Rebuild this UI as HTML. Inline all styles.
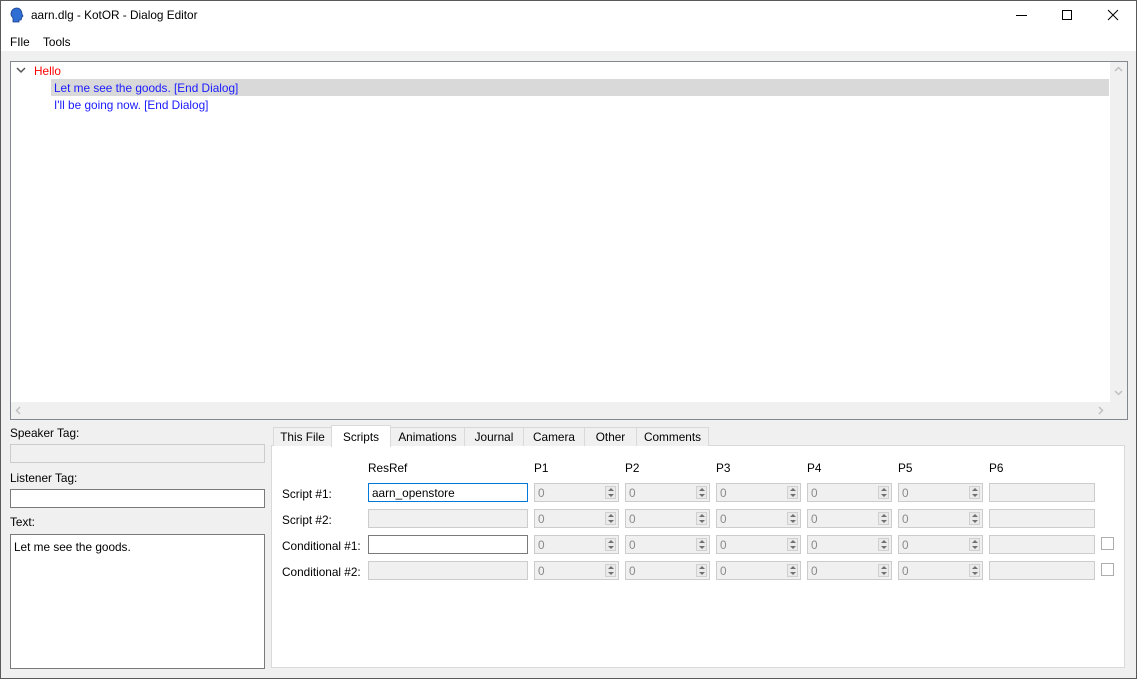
<!DOCTYPE html><html><head><style>
*{box-sizing:border-box;margin:0;padding:0}
body{width:1137px;height:679px;overflow:hidden;font-family:"Liberation Sans",sans-serif;font-size:11.8px;color:#000;background:#f0f0f0;position:relative}
.a{position:absolute}
.win{left:0;top:0;width:1137px;height:679px;border:1px solid #5a5a5a}
.inp{position:absolute;height:19px;border:1px solid #7a7a7a;background:#fff;padding:2px 3px}
.dis{border-color:#cccccc;background:#f0f0f0;color:#8a8a8a}
.spin{position:absolute;height:19px;border:1px solid #cccccc;background:#f0f0f0;color:#8a8a8a;padding:2px 3px;width:85px}
.spin i{position:absolute;right:2px;top:2px;width:11px;height:13px;border:1px solid #d0d0d0;background:#eaeaea}
.spin i:before{content:"";position:absolute;left:2px;top:1px;border:3px solid transparent;border-bottom:3px solid #707070;border-top:0}
.spin i:after{content:"";position:absolute;left:2px;top:7px;border:3px solid transparent;border-top:3px solid #707070;border-bottom:0}
.tab{position:absolute;top:427px;height:19px;border:1px solid #d9d9d9;border-bottom:none;background:#f0f0f0;text-align:center;line-height:18px}
.lab{position:absolute}
.cb{position:absolute;width:13px;height:13px;border:1px solid #adadad;background:#fff}
</style></head><body>
<div class="a" style="left:0;top:0;width:1137px;height:51px;background:#fff"></div>
<svg class="a" style="left:9px;top:7px" width="16" height="17" viewBox="0 0 16 17"><path d="M8 1C4 1 2 4 2 7c0 2 1 3 2 4v4h6v-2h2l1-3 1-1-1-2C13 4 11 1 8 1z" fill="#2f6fd4" stroke="#1a3f8a" stroke-width=".8"/></svg>
<div class="a" style="left:31px;top:8px">aarn.dlg - KotOR - Dialog Editor</div>
<div class="a" style="left:1016px;top:15px;width:11px;height:1px;background:#000"></div>
<div class="a" style="left:1062px;top:10px;width:10px;height:10px;border:1px solid #000"></div>
<svg class="a" style="left:1107px;top:9px" width="12" height="12"><path d="M1 1L11 11M11 1L1 11" stroke="#000" stroke-width="1"/></svg>
<div class="a" style="left:10px;top:35px">FIle</div>
<div class="a" style="left:43px;top:35px">Tools</div>
<div class="a" style="left:10px;top:61px;width:1118px;height:359px;border:1px solid #828790;background:#fff"></div>
<div class="a" style="left:1110px;top:62px;width:17px;height:340px;background:#f0f0f0"></div>
<div class="a" style="left:11px;top:402px;width:1116px;height:17px;background:#f0f0f0"></div>
<svg class="a" style="left:1114px;top:66px" width="9" height="6"><path d="M1 5L4.5 1.5L8 5" stroke="#c0c0c0" stroke-width="1.5" fill="none"/></svg>
<svg class="a" style="left:1114px;top:390px" width="9" height="6"><path d="M1 1L4.5 4.5L8 1" stroke="#c0c0c0" stroke-width="1.5" fill="none"/></svg>
<svg class="a" style="left:15px;top:406px" width="6" height="9"><path d="M5 1L1.5 4.5L5 8" stroke="#c0c0c0" stroke-width="1.5" fill="none"/></svg>
<svg class="a" style="left:1098px;top:406px" width="6" height="9"><path d="M1 1L4.5 4.5L1 8" stroke="#c0c0c0" stroke-width="1.5" fill="none"/></svg>
<svg class="a" style="left:16px;top:67px" width="10" height="7"><path d="M1 1L5 5L9 1" stroke="#555" stroke-width="1.5" fill="none"/></svg>
<div class="a" style="left:34px;top:64px;color:#ff0000">Hello</div>
<div class="a" style="left:51px;top:79px;width:1058px;height:17px;background:#d9d9d9"></div>
<div class="a" style="left:54px;top:81px;color:#1a1aff">Let me see the goods. [End Dialog]</div>
<div class="a" style="left:54px;top:98px;color:#1a1aff">I'll be going now. [End Dialog]</div>
<div class="lab" style="left:10px;top:426px">Speaker Tag:</div>
<div class="inp dis" style="left:10px;top:444px;width:255px"></div>
<div class="lab" style="left:10px;top:471px">Listener Tag:</div>
<div class="inp" style="left:10px;top:489px;width:255px"></div>
<div class="lab" style="left:10px;top:515px">Text:</div>
<div class="inp" style="left:10px;top:534px;width:255px;height:135px;padding:5px 3px">Let me see the goods.</div>
<div class="a" style="left:271px;top:445px;width:854px;height:223px;border:1px solid #d9d9d9;background:#fff"></div>
<div class="tab" style="left:273px;width:59px">This File</div>
<div class="tab" style="left:390px;width:75px">Animations</div>
<div class="tab" style="left:464px;width:60px">Journal</div>
<div class="tab" style="left:523px;width:62px">Camera</div>
<div class="tab" style="left:584px;width:53px">Other</div>
<div class="tab" style="left:636px;width:73px">Comments</div>
<div class="tab" style="left:331px;top:425px;width:60px;height:22px;background:#fff;line-height:22px">Scripts</div>
<div class="lab" style="left:368px;top:461px">ResRef</div>
<div class="lab" style="left:534px;top:461px">P1</div>
<div class="lab" style="left:625px;top:461px">P2</div>
<div class="lab" style="left:716px;top:461px">P3</div>
<div class="lab" style="left:807px;top:461px">P4</div>
<div class="lab" style="left:898px;top:461px">P5</div>
<div class="lab" style="left:989px;top:461px">P6</div>
<div class="lab" style="left:282px;top:487px">Script #1:</div>
<div class="lab" style="left:282px;top:513px">Script #2:</div>
<div class="lab" style="left:282px;top:539px">Conditional #1:</div>
<div class="lab" style="left:282px;top:565px">Conditional #2:</div>
<div class="inp" style="left:368px;top:483px;width:160px;border-color:#0078d7">aarn_openstore</div>
<div class="inp dis" style="left:368px;top:509px;width:160px"></div>
<div class="inp" style="left:368px;top:535px;width:160px"></div>
<div class="inp dis" style="left:368px;top:561px;width:160px"></div>
<div id="sp"></div>
<script>
var h='';[483,509,535,561].forEach(function(y){[534,625,716,807,898].forEach(function(x){h+='<div class="spin" style="left:'+x+'px;top:'+y+'px">0<i></i></div>'});h+='<div class="inp dis" style="left:989px;top:'+y+'px;width:106px"></div>'});
h+='<div class="cb" style="left:1101px;top:537px"></div><div class="cb" style="left:1101px;top:563px"></div>';
document.getElementById('sp').innerHTML=h;
</script>
<div class="a win"></div>
</body></html>
